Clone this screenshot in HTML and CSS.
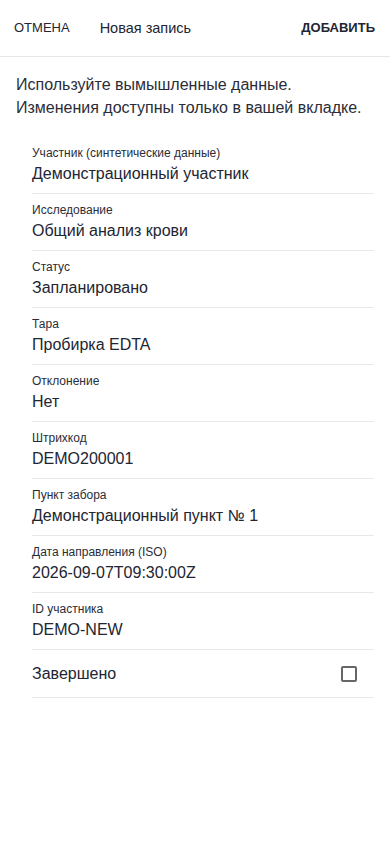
FILE: index.html
```html
<!DOCTYPE html>
<html lang="ru">
<head>
<meta charset="utf-8">
<meta name="viewport" content="width=device-width, initial-scale=1">
<title>Новая запись</title>
<link rel="stylesheet" href="styles.css">
</head>
<body>
<header class="topbar">
  <button class="btn btn-cancel">Отмена</button>
  <div class="title">Новая запись</div>
  <button class="btn btn-add">Добавить</button>
</header>
<main class="content">
  <p class="intro">Используйте вымышленные данные.<br>Изменения доступны только в вашей вкладке.</p>
  <div class="fields">
    <div class="field"><div class="label">Участник (синтетические данные)</div><div class="value">Демонстрационный участник</div></div>
    <div class="field"><div class="label">Исследование</div><div class="value">Общий анализ крови</div></div>
    <div class="field"><div class="label">Статус</div><div class="value">Запланировано</div></div>
    <div class="field"><div class="label">Тара</div><div class="value">Пробирка EDTA</div></div>
    <div class="field"><div class="label">Отклонение</div><div class="value">Нет</div></div>
    <div class="field"><div class="label">Штрихкод</div><div class="value">DEMO200001</div></div>
    <div class="field"><div class="label">Пункт забора</div><div class="value">Демонстрационный пункт № 1</div></div>
    <div class="field"><div class="label">Дата направления (ISO)</div><div class="value">2026-09-07T09:30:00Z</div></div>
    <div class="field"><div class="label">ID участника</div><div class="value">DEMO-NEW</div></div>
    <div class="field field-check"><span class="value">Завершено</span><span class="checkbox"></span></div>
  </div>
</main>
</body>
</html>
```
FILE: styles.css
```css
* { box-sizing: border-box; }
html, body { margin: 0; padding: 0; background: #fff; }
body {
  font-family: "Liberation Sans", Arial, sans-serif;
  color: #222532;
  width: 390px;
  min-height: 844px;
}
.topbar {
  height: 57px;
  display: flex;
  align-items: center;
  border-bottom: 1px solid #e6e6e6;
  padding: 0 15px 0 14px;
}
.btn {
  background: none;
  border: 0;
  padding: 0;
  font-family: inherit;
  text-transform: uppercase;
  color: #222532;
  font-size: 13px;
  line-height: 16px;
}
.btn-cancel { letter-spacing: 0; }
.title {
  margin-left: 30px;
  font-size: 14.5px;
  flex: 1;
}
.btn-add {
  font-weight: 700;
  letter-spacing: 0;
}
.content { padding: 16px 16px 0 16px; }
.intro {
  margin: 0;
  font-size: 16px;
  line-height: 23px;
  color: #2a2d38;
}
.fields {
  margin: 18px 0 0 16px;
}
.field {
  padding: 8px 0;
  border-bottom: 1px solid #e8e8e8;
}
.label {
  font-size: 12px;
  line-height: 16px;
  color: #2a2d38;
}
.value {
  margin-top: 2px;
  font-size: 16px;
  line-height: 22px;
  color: #222532;
}
.field-check {
  height: 48px;
  display: flex;
  align-items: center;
  justify-content: space-between;
  padding: 0 17px 0 0;
}
.field-check .value { margin-top: 0; }
.checkbox {
  width: 16px;
  height: 16px;
  border: 2px solid #666;
  border-radius: 2px;
}
```
